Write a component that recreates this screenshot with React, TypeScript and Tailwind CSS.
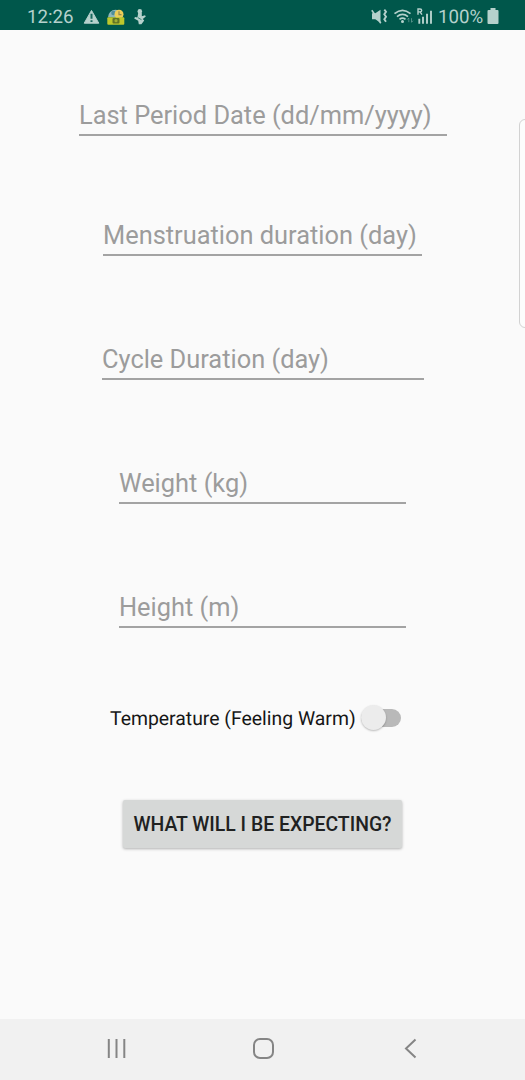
import { useState } from "react";

const fields = [
  { label: "Last Period Date (dd/mm/yyyy)", box: "mt-[65px] w-[368px] ml-[79px]" },
  { label: "Menstruation duration (day)", box: "mt-[79px] w-[319px] ml-[103px]" },
  { label: "Cycle Duration (day)", box: "mt-[83px] w-[322px] ml-[102px]" },
  { label: "Weight (kg)", box: "mt-[83px] w-[287px] ml-[119px]" },
  { label: "Height (m)", box: "mt-[83px] w-[287px] ml-[119px]" },
];

function StatusBar() {
  return (
    <header className="flex h-[30px] shrink-0 items-center bg-[#00574b] pt-[3px] text-[#b5d1cc]">
      <span className="ml-[27px] w-[56px] pt-px text-[18.7px] leading-none">12:26</span>
      <svg className="h-[18px] w-[64px]" viewBox="83 7.8 64 18" fill="currentColor">
        <path d="M91.5 10.2 98.8 23H84.2z" stroke="currentColor" strokeWidth="1" strokeLinejoin="round" />
        <path d="M90.5 13.5h2v5.1h-2zM90.5 20h2v1.8h-2z" fill="#17695e" />
        <path d="M108 17a7.5 7.5 0 0 1 15 0z" fill="#8eb7ba" />
        <circle cx="113.5" cy="12.8" r="2.3" fill="#4e8e9b" />
        <circle cx="119" cy="14" r="4.5" fill="#edcd58" />
        <path d="M119 11v3.5h2.5" fill="none" stroke="#918950" strokeWidth="1.2" />
        <rect x="107.3" y="17" width="17" height="7.5" rx="1" fill="#bdc72c" />
        <rect x="112.5" y="17.8" width="7" height="5.5" rx="1" fill="#627325" />
        <circle cx="116" cy="20.5" r="1.6" fill="#9ead34" />
        <circle cx="139.8" cy="11.2" r="2.3" />
        <path d="M138.2 12.8h3.6v3.2l3.2-1 .8 1.4-3 2.4 1.4 1.4-2.8 3.8h-2.6l-.6-3.4-4-2.2.8-1.6 2.4.4z" />
        <path d="m138 17.5 3.5 2" stroke="#17695e" strokeWidth=".8" />
      </svg>
      <svg className="ml-[224px] h-[18px] w-[62px]" viewBox="371 7.8 62 18" fill="none" stroke="currentColor">
        <path d="M372 13h3.3l5.2-3.5v13L375.3 19H372z" fill="currentColor" stroke="none" />
        <path d="m371.8 10 9 13" strokeWidth="1.6" />
        <path d="m384.3 9.5 1.7 2-1.7 2.5 1.7 2.5-1.7 2.5 1.7 2.5" strokeWidth="1.9" />
        <path d="M394.5 13.5q8-6.8 16 0M397 16.5q5.5-4.5 11 0M399.5 19.2q3-2.5 6 0" strokeWidth="1.7" />
        <circle cx="402.5" cy="21.2" r="1.5" fill="currentColor" stroke="none" />
        <path d="M408.8 22v-4m-1.6 1.5 1.6-1.7M411.5 18v4m1.5-1.5-1.5 1.7" strokeWidth=".8" opacity=".55" />
        <path d="M418 14.5V8.8h2q1.7 0 1.7 1.4t-1.7 1.5h-2m2 0 2 2.8" strokeWidth="1.4" />
        <path d="M419.3 18.5V23.5M423 16.5v7M427 13.5v10M431 10.5v13" strokeWidth="1.9" />
      </svg>
      <span className="ml-[5px] w-[48px] whitespace-nowrap pt-px text-[18.7px] leading-none">100%</span>
      <svg className="ml-[1px] h-[18px] w-[13px]" viewBox="0 0 13 18" fill="currentColor">
        <path d="M3.5 0h5v2h2q1 0 1 1v12q0 1-1 1h-9q-1 0-1-1V3q0-1 1-1h2z" />
      </svg>
    </header>
  );
}

export default function App() {
  const [warm, setWarm] = useState(false);
  return (
    <div className="relative flex h-[1080px] w-[525px] flex-col overflow-hidden bg-[#fafafa] font-['Roboto',sans-serif] [text-rendering:geometricPrecision]">
      <StatusBar />
      <main className="flex flex-1 flex-col">
        {fields.map((f) => (
          <div key={f.label} className={`h-[41px] border-b-2 border-[#a3a3a3] ${f.box}`}>
            <input
              aria-label={f.label}
              placeholder={f.label}
              className="block h-[39px] w-full bg-transparent text-[25.4px] text-[#222] outline-none placeholder:text-[#9c9c9c]"
            />
          </div>
        ))}
        <div className="ml-[110px] mt-[74px] flex h-[32px] items-center">
          <span className="w-[251px] whitespace-nowrap pt-[2px] text-[19.4px] text-[#161616]">Temperature (Feeling Warm)</span>
          <button
            role="switch"
            aria-checked={warm}
            aria-label="Temperature (Feeling Warm)"
            onClick={() => setWarm(!warm)}
            className="mb-px flex h-[26px] w-[40px] items-center"
          >
            <span className="flex h-[18px] w-full items-center rounded-full bg-[#b9b9b9]">
              <span className={`size-[25px] shrink-0 rounded-full bg-[#ececec] shadow-[0_1px_2px_rgba(0,0,0,0.25)] ${warm ? "ml-[15px]" : ""}`} />
            </span>
          </button>
        </div>
        <button className="ml-[123px] mt-[66px] h-[48px] w-[279px] whitespace-nowrap rounded-[2px] bg-[#d6d8d7] pt-[2px] text-[19.4px] font-medium text-[#202121] shadow-[0_1px_3px_rgba(0,0,0,0.3)]">
          WHAT WILL I BE EXPECTING?
        </button>
      </main>
      <nav className="flex h-[61px] shrink-0 items-center justify-center bg-[#f1f1f1] pb-[3px] text-[#858585]">
        <svg className="h-[24px] w-[320px]" viewBox="103 1036 320 24" fill="none" stroke="currentColor" strokeWidth="2">
          <path d="M108.8 1039v19M116.5 1039v19M124.3 1039v19" />
          <rect x="254" y="1039" width="19" height="19" rx="6" />
          <path d="m415.5 1039.5-9.5 9 9.5 9" />
        </svg>
      </nav>
      <div className="absolute left-[519px] top-[119px] h-[209px] w-[12px] rounded-[7px] border-[1.5px] border-[#d2d2d2] bg-[#fcfcfc]" />
    </div>
  );
}
